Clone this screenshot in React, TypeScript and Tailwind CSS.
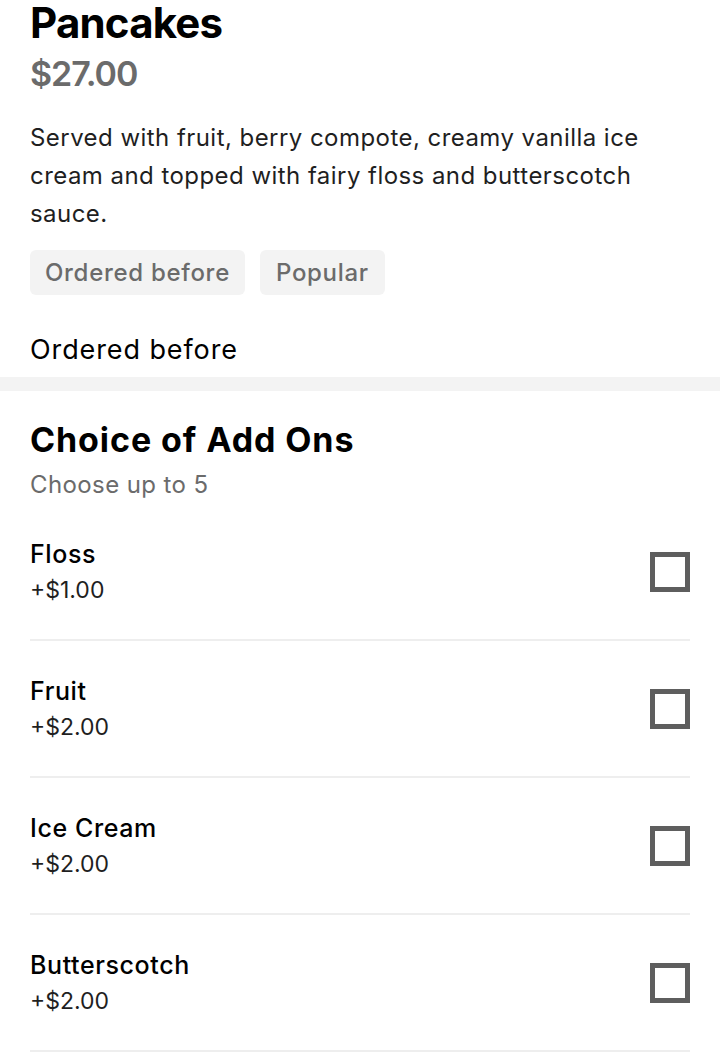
import React from "react";

const items = [
  { name: "Floss", price: "+$1.00" },
  { name: "Fruit", price: "+$2.00" },
  { name: "Ice Cream", price: "+$2.00" },
  { name: "Butterscotch", price: "+$2.00" },
];

export default function App() {
  return (
    <div className="w-[720px] h-[1060px] overflow-hidden bg-white text-black" style={{ fontFamily: "Inter, 'Noto Sans', sans-serif" }}>
      <div className="px-[30px]">
        <h1 className="text-[42px] leading-[46px] font-bold tracking-[-0.8px]">Pancakes</h1>
        <div className="text-[34px] leading-[40px] font-semibold text-[#6b6b6b] mt-[8px] tracking-[-1px]">$27.00</div>
        <p className="text-[24px] leading-[38px] tracking-[0.45px] text-[#1f1f1f] mt-[25px]">
          Served with fruit, berry compote, creamy vanilla ice cream and topped with fairy floss and butterscotch sauce.
        </p>
        <div className="flex gap-[15px] mt-[17px]">
          <span className="h-[45px] px-[15px] flex items-center rounded-[6px] bg-[#f3f3f3] text-[#6b6b6b] text-[24px] tracking-[0.7px] font-medium">Ordered before</span>
          <span className="h-[45px] px-[16px] flex items-center rounded-[6px] bg-[#f3f3f3] text-[#6b6b6b] text-[24px] tracking-[0.7px] font-medium">Popular</span>
        </div>
        <div className="pt-[37px] pb-[9px] text-[27px] leading-[36px] tracking-[0.9px] text-black">Ordered before</div>
      </div>
      <div className="h-[14px] bg-[#f3f3f3]" />
      <div className="px-[30px]">
        <h2 className="text-[34px] leading-[40px] font-bold mt-[29px] tracking-[0.9px]">Choice of Add Ons</h2>
        <div className="text-[24px] leading-[30px] tracking-[0.4px] text-[#6b6b6b] mt-[10px]">Choose up to 5</div>
        <div className="mt-[4px]">
          {items.map((it) => (
            <div key={it.name} className="h-[137px] flex items-center justify-between border-b-2 border-[#eeeeee]">
              <div className="flex flex-col">
                <span className="text-[25px] leading-[36px] tracking-[0.6px] font-medium">{it.name}</span>
                <span className="text-[23px] leading-[36px] text-[#1f1f1f]">{it.price}</span>
              </div>
              <div className="w-[40px] h-[40px] border-[5px] border-[#5e5e5e]" />
            </div>
          ))}
        </div>
      </div>
    </div>
  );
}
